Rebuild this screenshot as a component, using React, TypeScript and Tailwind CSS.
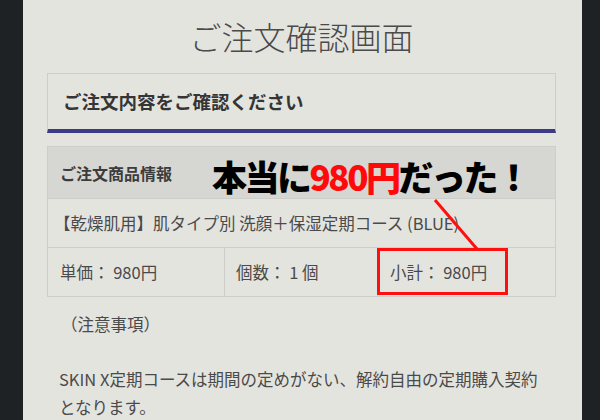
import React from "react";

const jp = { fontFamily: '"Noto Sans CJK JP", "Noto Sans", sans-serif' };

export default function App() {
  return (
    <div className="relative flex h-[420px] w-[600px] overflow-hidden bg-[#1e2224]" style={jp}>
      <div className="w-[23px] shrink-0" />
      <main className="flex-1 bg-[#e4e4df] pl-[24px] pr-[26px] text-[#4a4a4a]">
        <h1 className="h-[73px] pt-[16px] text-center text-[32px] font-light leading-[40px] text-[#4a4a4a]">
          ご注文確認画面
        </h1>

        <div className="flex h-[60px] items-center border-x border-t border-b-4 border-[#cdcdc9] border-b-[#3d3a88] pl-[15px]">
          <span className="text-[18.5px] font-bold text-[#353535]">ご注文内容をご確認ください</span>
        </div>

        <div className="mt-[13px] border border-[#cdcdc9]">
          <div className="flex h-[51px] items-center bg-[#d6d6d2] pl-[12px]">
            <span className="text-[16px] font-bold text-[#3c3c3c]">ご注文商品情報</span>
          </div>
          <div className="flex h-[49px] items-center border-t border-[#cdcdc9] pl-[6px] text-[16.5px]">
            【乾燥肌用】肌タイプ別 洗顔＋保湿定期コース (BLUE)
          </div>
          <div className="flex h-[49px] border-t border-[#cdcdc9] text-[16.5px]">
            <div className="flex w-[177px] items-center border-r border-[#cdcdc9] pl-[12px]">単価： 980円</div>
            <div className="flex w-[153px] items-center border-r border-[#cdcdc9] pl-[11px]">個数： 1 個</div>
            <div className="flex flex-1 items-center pl-[12px]">小計： 980円</div>
          </div>
        </div>

        <p className="pl-[14px] pt-[14px] text-[16.5px] leading-[26px]">（注意事項）</p>
        <p className="mt-[28px] pl-[12px] text-[16.5px] leading-[28px]">
          SKIN X定期コースは期間の定めがない、解約自由の定期購入契約
          <br />
          となります。
        </p>
      </main>
      <div className="w-[18px] shrink-0" />

      {/* annotation overlay */}
      <div className="absolute left-[212px] top-[154px] text-[35px] font-black leading-[44px] tracking-[-2.5px] text-black">
        本当に<span className="text-[#ff0a0a]">980円</span>だった！
      </div>
      <svg className="absolute left-0 top-0" width="600" height="420">
        <line x1="435" y1="200" x2="477" y2="249" stroke="#ff1010" strokeWidth="3" />
      </svg>
      <div className="absolute left-[377px] top-[248px] h-[47px] w-[131px] border-[3px] border-[#ff1010]" />
    </div>
  );
}
